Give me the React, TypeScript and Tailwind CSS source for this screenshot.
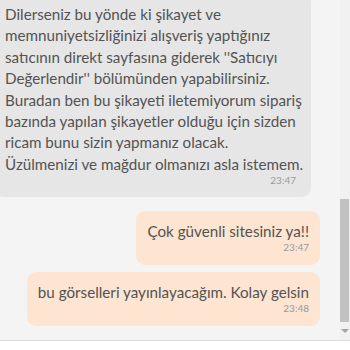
import React from 'react';

const grayLines = [
    'Dilerseniz bu yönde ki şikayet ve',
    'memnuniyetsizliğinizi alışveriş yaptığınız',
    "satıcının direkt sayfasına giderek ''Satıcıyı",
    "Değerlendir'' bölümünden yapabilirsiniz.",
    'Buradan ben bu şikayeti iletemiyorum sipariş',
    'bazında yapılan şikayetler olduğu için sizden',
    'ricam bunu sizin yapmanız olacak.',
    'Üzülmenizi ve mağdur olmanızı asla istemem.',
];

const font = { fontFamily: 'Lato, "Noto Sans", sans-serif' };

const Mine = ({ text, time, className = '' }: { text: string; time: string; className?: string }) => (
    <div className={`self-end mr-[20px] bg-[#fde5d1] rounded-[9px] pl-[11px] pr-[11px] pt-[10px] pb-[13px] ${className}`}>
        <p className="text-[15.2px] leading-[21px] text-[#535353] whitespace-nowrap text-right">{text}</p>
        <p className="text-[10px] leading-[10px] text-[#999] text-right">{time}</p>
    </div>
);

export default function App() {
    return (
        <div className="w-[350px] h-[350px] bg-white overflow-hidden" style={font}>
            <div className="flex h-[341px] border-b border-[#dcdcdc]">
                {/* Chat area */}
                <div className="w-[340px] h-full bg-[#f4f4f4] overflow-hidden">
                    <div className="flex flex-col -mt-[6px]">
                        <div className="-ml-[5px] w-[316px] bg-[#e6e6e6] rounded-[9px] pl-[10px] pr-[8px] pt-[10px] pb-[12px]">
                            {grayLines.map((l) => (
                                <p key={l} className="text-[15.2px] leading-[21.4px] text-[#535353] whitespace-nowrap">{l}</p>
                            ))}
                            <p className="text-[10px] leading-[10px] text-[#999] text-right pr-[7px]">23:47</p>
                        </div>
                        <Mine text="Çok güvenli sitesiniz ya!!" time="23:47" className="mt-[14px]" />
                        <Mine text="bu görselleri yayınlayacağım. Kolay gelsin" time="23:48" className="mt-[7px]" />
                    </div>
                </div>
                {/* Scrollbar */}
                <div className="w-[10px] h-full bg-[#f1f1f1] flex flex-col">
                    <div className="h-[199px]" />
                    <div className="h-[123px] w-[9px] bg-[#c1c1c1]" />
                    <div className="flex-1 flex items-center justify-center">
                        <div className="w-0 h-0 border-l-[4px] border-r-[4px] border-t-[4px] border-l-transparent border-r-transparent border-t-[#a3a3a3]" />
                    </div>
                </div>
            </div>
        </div>
    );
}
